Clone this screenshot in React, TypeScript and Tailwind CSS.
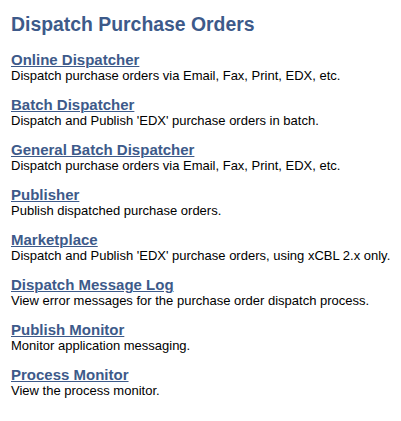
import React from "react";

const items: { title: string; desc: string }[] = [
  { title: "Online Dispatcher", desc: "Dispatch purchase orders via Email, Fax, Print, EDX, etc." },
  { title: "Batch Dispatcher", desc: "Dispatch and Publish 'EDX' purchase orders in batch." },
  { title: "General Batch Dispatcher", desc: "Dispatch purchase orders via Email, Fax, Print, EDX, etc." },
  { title: "Publisher", desc: "Publish dispatched purchase orders." },
  { title: "Marketplace", desc: "Dispatch and Publish 'EDX' purchase orders, using xCBL 2.x only." },
  { title: "Dispatch Message Log", desc: "View error messages for the purchase order dispatch process." },
  { title: "Publish Monitor", desc: "Monitor application messaging." },
  { title: "Process Monitor", desc: "View the process monitor." },
];

export default function App() {
  return (
    <div
      className="w-[401px] h-[421px] bg-white pl-[11px] pt-[13px]"
      style={{ fontFamily: '"Liberation Sans", Arial, sans-serif' }}
    >
      <h1 className="text-[19.4px] leading-[23px] font-bold text-[#3d5a8a]">
        Dispatch Purchase Orders
      </h1>
      <div className="mt-[15px] flex flex-col gap-[12px]">
        {items.map((it) => (
          <div key={it.title} className="flex flex-col">
            <a
              href="#"
              className="self-start text-[15px] leading-[17px] font-bold text-[#3d5a8a] underline decoration-1"
            >
              {it.title}
            </a>
            <div className="text-[13px] leading-[16px] text-black">{it.desc}</div>
          </div>
        ))}
      </div>
    </div>
  );
}
